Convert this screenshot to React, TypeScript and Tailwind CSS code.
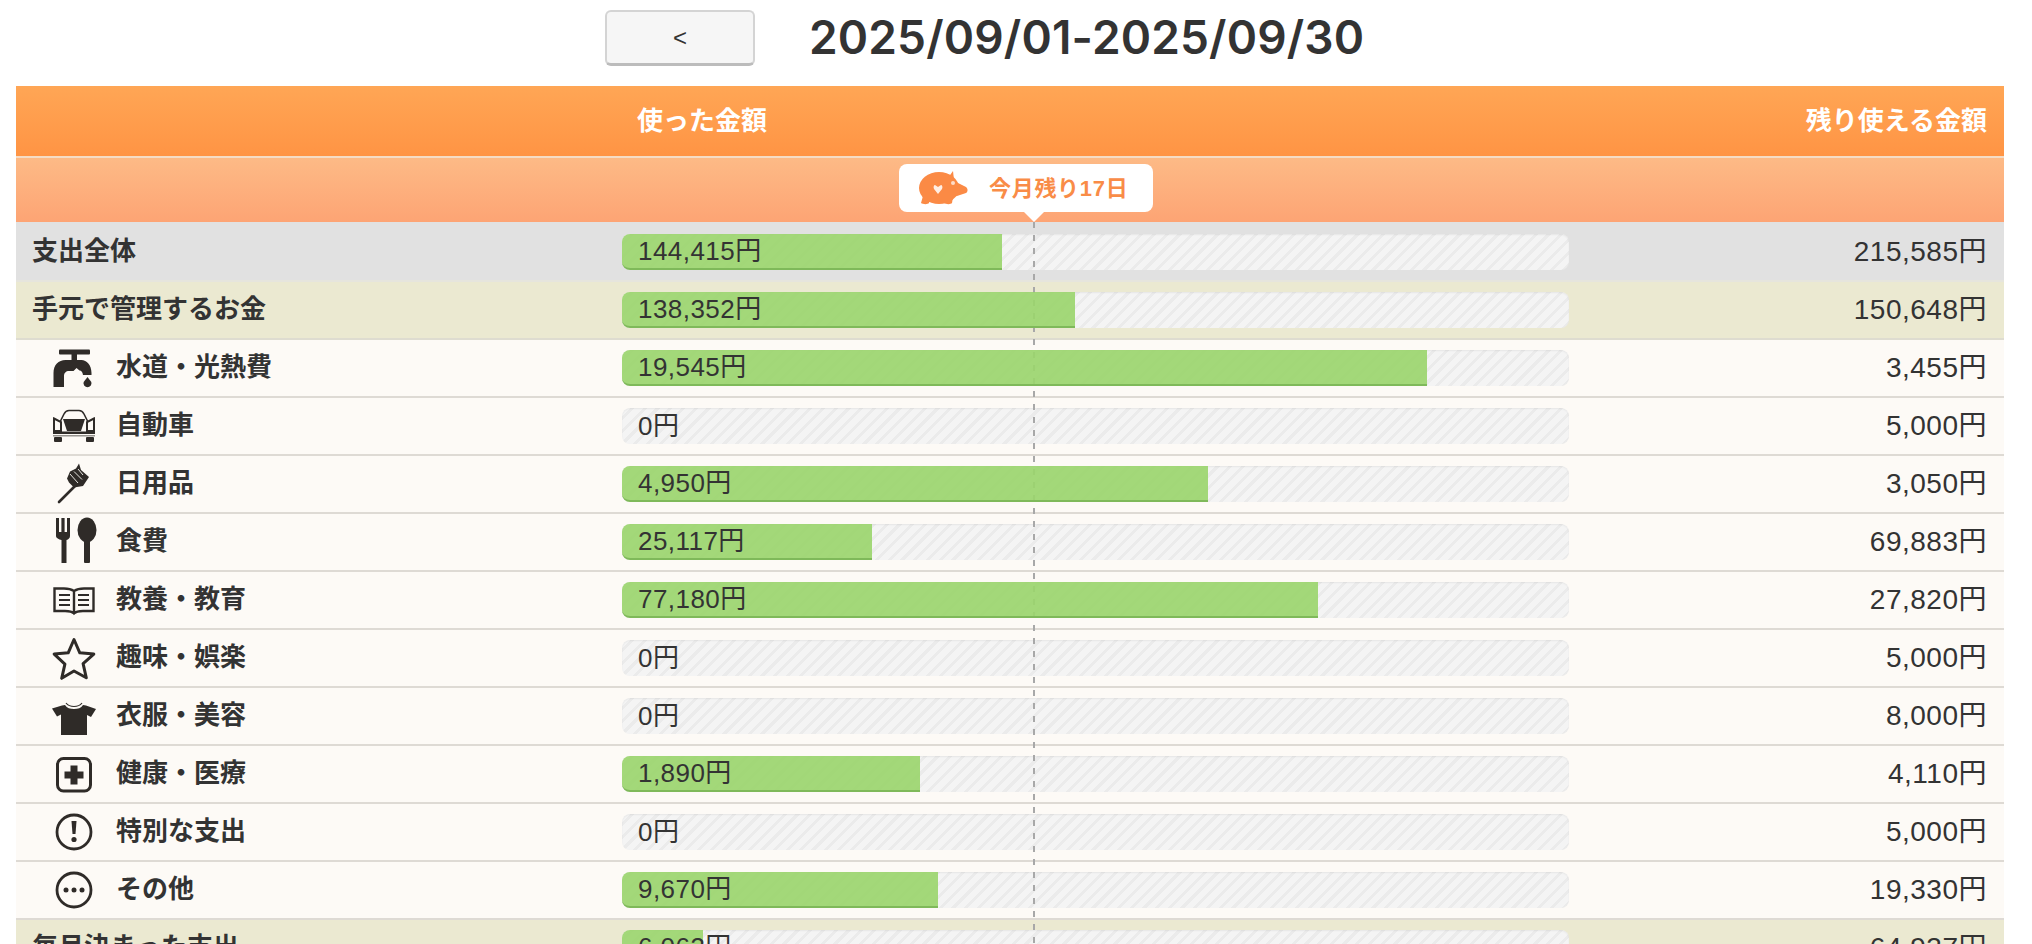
import type { ReactNode } from "react";

const ink = "#2f2b28";

function FaucetIcon() {
  return (
    <svg width="44" height="44" viewBox="0 0 44 44" fill={ink}>
      <rect x="7" y="3.500" width="31" height="5" rx="1" />
      <rect x="19.500" y="8" width="5.500" height="7" />
      <path d="M1.500 41V27c0-8 5-13 12-13h16c5 0 10 5 10 13v2h-8.500c-.5-3-1.500-4.500-3.500-4.500l-3-2.500-3 3H17c-3 0-5 2-5 5v11z" />
      <path d="M35.500 31l3.800 5a4 4 0 1 1-7.600 0z" />
    </svg>
  );
}

function CarIcon() {
  return (
    <svg width="44" height="44" viewBox="0 0 44 44" fill={ink}>
      <path d="M8 18l4-8c1-2 3-3.500 5-3.500h10c2 0 4 1.500 5 3.500l4 8" fill="none" stroke={ink} strokeWidth="1.600" />
      <path d="M11 15h22l-4 12H15z" />
      <path d="M2 14.500l7 3.500v9H2z" fill="none" stroke={ink} strokeWidth="2" />
      <path d="M42 14.500l-7 3.500v9h7z" fill="none" stroke={ink} strokeWidth="2" />
      <rect x="1" y="27.500" width="42" height="2.500" />
      <rect x="1" y="31" width="42" height="1.500" opacity=".5" />
      <rect x="2" y="33" width="8" height="5" rx="1" />
      <rect x="34" y="33" width="8" height="5" rx="1" />
    </svg>
  );
}

function BrushIcon() {
  return (
    <svg width="44" height="44" viewBox="0 0 44 44" fill={ink}>
      <path d="M7 40L25 22" stroke={ink} strokeWidth="2.600" strokeLinecap="round" />
      <path d="M22 25.500l9-1.500 6-9-8-7-2-6.500-3 5-6 3-3 7 2 4z" />
      <path d="M18 12l8 9M22 9.500l8 8M26 7l5 6" stroke="#fdfaf6" strokeWidth=".9" />
    </svg>
  );
}

function CutleryIcon() {
  return (
    <svg width="44" height="44" viewBox="0 0 44 44" fill={ink} className="overflow-visible">
      <path d="M4 -2h3v14h2.400V-2h3.200v14H15V-2h3v18c0 2-1.500 3.500-3.500 4V43h-5V20C7 19.500 4 18 4 16z" />
      <ellipse cx="35" cy="10" rx="9.500" ry="12.500" />
      <rect x="32" y="18" width="6" height="25" rx="1" />
    </svg>
  );
}

function BookIcon() {
  return (
    <svg width="44" height="44" viewBox="0 0 44 44" fill="none" stroke={ink} strokeWidth="2.400">
      <path d="M22 13c-3-2-6-2.500-10-2.500H2.500V33H13c4 0 7 .5 9 2.500 2-2 5-2.500 9-2.500h10.500V10.500H32c-4 0-7 .5-10 2.500zM22 13v22" />
      <path d="M7 17h11M7 22h11M7 27h11M26 17h11M26 22h11M26 27h11" strokeWidth="2" />
    </svg>
  );
}

function StarIcon() {
  return (
    <svg width="44" height="44" viewBox="0 0 44 44" fill="none" stroke={ink} strokeWidth="3" strokeLinejoin="round">
      <path d="M22 3.500l5.800 13.300 14 1.300-10.700 9.500 3.200 14.200L22 35l-12.300 7.300 3.200-14.200L2.200 18.100l14-1.300z" />
    </svg>
  );
}

function ShirtIcon() {
  return (
    <svg width="44" height="44" viewBox="0 0 44 44" fill={ink}>
      <path d="M13 11c2 3 5 4 9 4s7-1 9-4l3 .5 10 3.500-5 8-4-2V41H9V20.500l-4 2-5-8 10-3z" />
      <path d="M14 9c2 2.500 4.500 3.500 8 3.500s6-1 8-3.500" fill="none" stroke={ink} strokeWidth="1.200" />
    </svg>
  );
}

function MedicalIcon() {
  return (
    <svg width="44" height="44" viewBox="0 0 44 44" fill={ink}>
      <rect x="5.500" y="6.500" width="33" height="32.500" rx="6" fill="none" stroke={ink} strokeWidth="3" />
      <path d="M18.500 13.500h7v6h6v7h-6v6h-7v-6h-6v-7h6z" />
    </svg>
  );
}

function AlertIcon() {
  return (
    <svg width="44" height="44" viewBox="0 0 44 44" fill={ink}>
      <circle cx="22" cy="22" r="17" fill="none" stroke={ink} strokeWidth="2.800" />
      <path d="M19.500 11h5l-1 13h-3z" />
      <circle cx="22" cy="29.500" r="2.600" />
    </svg>
  );
}

function MoreIcon() {
  return (
    <svg width="44" height="44" viewBox="0 0 44 44" fill={ink}>
      <circle cx="22" cy="22" r="17" fill="none" stroke={ink} strokeWidth="2.800" />
      <circle cx="14" cy="22" r="2.500" />
      <circle cx="22" cy="22" r="2.500" />
      <circle cx="30" cy="22" r="2.500" />
    </svg>
  );
}

function PigIcon() {
  return (
    <svg width="50" height="36" viewBox="0 0 50 36" fill="#fb8a45">
      <ellipse cx="21" cy="18" rx="20" ry="16" />
      <path d="M30 8l5-7 1 9z" />
      <path d="M36 11l12 6c2 1.500 2 5 0 6l-12 4z" />
      <path d="M5 26h8l-2 7c-1 1.500-6 1.500-8 0zM26 27h9l-1 6c-1 1.500-6 1.500-8 0z" />
      <circle cx="35" cy="13" r="2" fill="#fff" opacity=".7" />
      <path d="M20 24l-4-5c-1-2 0-4 1-4l3 2 3-2c1 0 2 2 1 4z" fill="#fff" opacity=".85" />
    </svg>
  );
}

type Row = {
  label: string;
  spent: number;
  left: number;
  icon?: ReactNode;
  tone?: "total" | "group";
};

const rows: Row[] = [
  { label: "支出全体", spent: 144415, left: 215585, tone: "total" },
  { label: "手元で管理するお金", spent: 138352, left: 150648, tone: "group" },
  { label: "水道・光熱費", spent: 19545, left: 3455, icon: <FaucetIcon /> },
  { label: "自動車", spent: 0, left: 5000, icon: <CarIcon /> },
  { label: "日用品", spent: 4950, left: 3050, icon: <BrushIcon /> },
  { label: "食費", spent: 25117, left: 69883, icon: <CutleryIcon /> },
  { label: "教養・教育", spent: 77180, left: 27820, icon: <BookIcon /> },
  { label: "趣味・娯楽", spent: 0, left: 5000, icon: <StarIcon /> },
  { label: "衣服・美容", spent: 0, left: 8000, icon: <ShirtIcon /> },
  { label: "健康・医療", spent: 1890, left: 4110, icon: <MedicalIcon /> },
  { label: "特別な支出", spent: 0, left: 5000, icon: <AlertIcon /> },
  { label: "その他", spent: 9670, left: 19330, icon: <MoreIcon /> },
  { label: "毎月決まった支出", spent: 6063, left: 64937, tone: "group" },
];

const yen = (n: number) => n.toLocaleString("en-US") + "円";

function BudgetRow({ row }: { row: Row }) {
  const rowColor =
    row.tone === "total"
      ? "bg-[#e1e1e1] border-[#e6e5dd]"
      : row.tone === "group"
        ? "bg-[#ebe9d1] border-[#dedcd0]"
        : "bg-[#fdfaf6] border-[#dedad4]";
  const pct = (row.spent / (row.spent + row.left)) * 100;

  return (
    <div className={`flex h-[58px] items-start border-b-2 ${rowColor}`}>
      {row.icon ? (
        <div className="flex h-[56px] w-[606px] shrink-0 items-center gap-5 pl-9">
          {row.icon}
          <span className="-mt-[2px] text-[26px] font-bold leading-none text-[#333]">{row.label}</span>
        </div>
      ) : (
        <div className="flex h-[54px] w-[606px] shrink-0 items-center pl-4 text-[26px] font-bold leading-none text-[#333]">
          {row.label}
        </div>
      )}
      <div className="mt-[10px] h-9 w-[947px] shrink-0 rounded-lg bg-[#f0f0f0] bg-[repeating-linear-gradient(135deg,#f4f4f4_0,#f4f4f4_6px,#ebebeb_6px,#ebebeb_9px)] shadow-[inset_0_1px_2px_rgba(0,0,0,0.06)]">
        <div
          style={{ width: `${pct}%` }}
          className={
            row.spent > 0
              ? "relative z-20 flex h-9 items-center whitespace-nowrap rounded-l-lg border-b-2 border-[#7fb95a] bg-[#9ad56c]/90 pl-4 text-[26px] tracking-[0.45px] text-[#333]"
              : "relative z-20 flex h-9 items-center whitespace-nowrap pl-4 text-[26px] tracking-[0.45px] text-[#333]"
          }
        >
          {yen(row.spent)}
        </div>
      </div>
      <div className="flex h-[56px] flex-1 items-center justify-end pr-[17px] text-[28px] tracking-[0.5px] text-[#333]">
        {yen(row.left)}
      </div>
    </div>
  );
}

export default function App() {
  return (
    <div className="h-screen overflow-hidden bg-white font-['Liberation_Sans','Noto_Sans_CJK_JP',sans-serif]">
      <div className="flex h-[86px] items-start pl-[605px]">
        <button className="mt-[10px] flex h-[56px] w-[150px] items-center justify-center rounded-md border-2 border-[#d4d4d4] border-b-[3px] border-b-[#bcbcbc] bg-[#f6f6f6] text-[24px] text-[#333]">
          &lt;
        </button>
        <h1 className="ml-[54px] mt-[7px] font-['Inter',sans-serif] text-[46px] font-semibold leading-[60px] tracking-[0.15px] text-[#333]">
          2025/09/01-2025/09/30
        </h1>
      </div>

      <div className="relative ml-4 mr-7">
        <div className="flex h-[70px] items-center bg-gradient-to-b from-[#ffa655] to-[#ff9444] text-[26px] font-bold text-white">
          <div className="w-[621px] shrink-0" />
          <div>使った金額</div>
          <div className="flex-1 pr-[17px] text-right">残り使える金額</div>
        </div>
        <div className="h-[2px] bg-[#f5dcc5]" />
        <div className="h-16 bg-gradient-to-b from-[#fdba86] to-[#fda474]" />

        {/* today's marker */}
        <div className="absolute left-[883px] top-[78px] z-30 flex h-12 w-[254px] items-center rounded-lg bg-white pl-[19px]">
          <PigIcon />
          <span className="ml-[21px] text-[22px] font-bold tracking-[0.7px] text-[#f98c47]">今月残り17日</span>
          <div className="absolute left-[125px] top-full h-0 w-0 border-x-[10px] border-t-[10px] border-x-transparent border-t-white" />
        </div>
        <div className="absolute bottom-0 left-[1017px] top-[136px] z-10 w-[2px] bg-[repeating-linear-gradient(180deg,#a8a8a8_0,#a8a8a8_6px,transparent_6px,transparent_13px)]" />

        <div className="h-[2px] bg-[#e1e1e1]" />
        {rows.map((row) => (
          <BudgetRow key={row.label} row={row} />
        ))}
      </div>
    </div>
  );
}
